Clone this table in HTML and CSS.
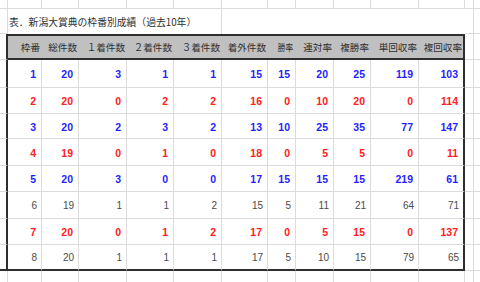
FILE: index.html
```html
<!DOCTYPE html>
<html lang="ja">
<head>
<meta charset="utf-8">
<title>新潟大賞典の枠番別成績</title>
<link rel="stylesheet" href="styles.css">
</head>
<body>
<div class="sheet">
  <div class="row r-top">
    <div class="c"></div><div class="c"></div><div class="c"></div><div class="c"></div><div class="c"></div><div class="c"></div><div class="c"></div><div class="c"></div><div class="c"></div><div class="c"></div><div class="c"></div><div class="c"></div><div class="c"></div><div class="c n"></div>
  </div>
  <div class="row r-title">
    <div class="c"></div>
    <div class="c title nb">表．新潟大賞典の枠番別成績（過去10年）</div>
    <div class="c nb"></div><div class="c nb"></div><div class="c nb"></div><div class="c nb"></div><div class="c nb"></div><div class="c nb"></div>
    <div class="c"></div><div class="c n"></div>
  </div>
  <div class="row r-head">
    <div class="c edge"></div>
    <div class="c h">枠番</div>
    <div class="c h">総件数</div>
    <div class="c h">１着件数</div>
    <div class="c h">２着件数</div>
    <div class="c h">３着件数</div>
    <div class="c h">着外件数</div>
    <div class="c h narrow"><span class="squeeze">勝率</span></div>
    <div class="c h">連対率</div>
    <div class="c h">複勝率</div>
    <div class="c h">単回収率</div>
    <div class="c h last">複回収率</div>
    <div class="c"></div><div class="c n"></div>
  </div>
  <div class="row r-data h28 blue">
    <div class="c edge"></div>
    <div class="c v">1</div><div class="c v">20</div><div class="c v">3</div><div class="c v">1</div><div class="c v">1</div><div class="c v">15</div><div class="c v">15</div><div class="c v">20</div><div class="c v">25</div><div class="c v">119</div><div class="c v last">103</div>
    <div class="c"></div><div class="c n"></div>
  </div>
  <div class="row r-data h26 red">
    <div class="c edge"></div>
    <div class="c v">2</div><div class="c v">20</div><div class="c v">0</div><div class="c v">2</div><div class="c v">2</div><div class="c v">16</div><div class="c v">0</div><div class="c v">10</div><div class="c v">20</div><div class="c v">0</div><div class="c v last">114</div>
    <div class="c"></div><div class="c n"></div>
  </div>
  <div class="row r-data h25 blue">
    <div class="c edge"></div>
    <div class="c v">3</div><div class="c v">20</div><div class="c v">2</div><div class="c v">3</div><div class="c v">2</div><div class="c v">13</div><div class="c v">10</div><div class="c v">25</div><div class="c v">35</div><div class="c v">77</div><div class="c v last">147</div>
    <div class="c"></div><div class="c n"></div>
  </div>
  <div class="row r-data h27 red">
    <div class="c edge"></div>
    <div class="c v">4</div><div class="c v">19</div><div class="c v">0</div><div class="c v">1</div><div class="c v">0</div><div class="c v">18</div><div class="c v">0</div><div class="c v">5</div><div class="c v">5</div><div class="c v">0</div><div class="c v last">11</div>
    <div class="c"></div><div class="c n"></div>
  </div>
  <div class="row r-data h26 blue">
    <div class="c edge"></div>
    <div class="c v">5</div><div class="c v">20</div><div class="c v">3</div><div class="c v">0</div><div class="c v">0</div><div class="c v">17</div><div class="c v">15</div><div class="c v">15</div><div class="c v">15</div><div class="c v">219</div><div class="c v last">61</div>
    <div class="c"></div><div class="c n"></div>
  </div>
  <div class="row r-data h27 plain">
    <div class="c edge"></div>
    <div class="c v">6</div><div class="c v">19</div><div class="c v">1</div><div class="c v">1</div><div class="c v">2</div><div class="c v">15</div><div class="c v">5</div><div class="c v">11</div><div class="c v">21</div><div class="c v">64</div><div class="c v last">71</div>
    <div class="c"></div><div class="c n"></div>
  </div>
  <div class="row r-data h26 red">
    <div class="c edge"></div>
    <div class="c v">7</div><div class="c v">20</div><div class="c v">0</div><div class="c v">1</div><div class="c v">2</div><div class="c v">17</div><div class="c v">0</div><div class="c v">5</div><div class="c v">15</div><div class="c v">0</div><div class="c v last">137</div>
    <div class="c"></div><div class="c n"></div>
  </div>
  <div class="row r-data h26 plain r-end">
    <div class="c edge"></div>
    <div class="c v">8</div><div class="c v">20</div><div class="c v">1</div><div class="c v">1</div><div class="c v">1</div><div class="c v">17</div><div class="c v">5</div><div class="c v">10</div><div class="c v">15</div><div class="c v">79</div><div class="c v last">65</div>
    <div class="c"></div><div class="c n"></div>
  </div>
  <div class="row r-bottom">
    <div class="c"></div><div class="c"></div><div class="c"></div><div class="c"></div><div class="c"></div><div class="c"></div><div class="c"></div><div class="c"></div><div class="c"></div><div class="c"></div><div class="c"></div><div class="c"></div><div class="c"></div><div class="c n"></div>
  </div>
</div>
</body>
</html>
```

FILE: styles.css
```css
html, body {
  margin: 0;
  padding: 0;
  background: #ffffff;
}

.sheet {
  width: 480px;
  height: 282px;
  overflow: hidden;
  display: flex;
  flex-direction: column;
  font-family: "Noto Sans CJK JP", "Noto Sans", sans-serif;
  color: #333333;
}

.row {
  display: grid;
  grid-template-columns: 8px 34px 37px 48px 47px 48px 46px 28px 38px 37px 48px 46px 9px 1fr;
  flex: none;
}

.c {
  box-sizing: border-box;
  border-right: 1px solid #dcdcdc;
  border-bottom: 1px solid #dcdcdc;
  min-width: 0;
  white-space: nowrap;
}

.c.n { border-right: none; }

.r-top { height: 9px; }
.r-title { height: 25px; }
.r-head { height: 26px; }
.h28 { height: 28px; }
.h27 { height: 27px; }
.h26 { height: 26px; }
.h25 { height: 25px; }
.r-bottom { flex: 1; }
.r-bottom .c { border-bottom: none; }

.c.nb { border-right: none; border-bottom: none; }
.r-title .c:nth-child(8) { border-bottom: none; }

.title {
  grid-column: span 5;
  border-right: 1px solid #dcdcdc !important;
  display: flex;
  align-items: center;
  padding-left: 1px;
  padding-top: 1px;
  font-size: 9.8px;
  color: #2f2f2f;
  overflow: visible;
}

.c.edge {
  border-right: 2px solid #2e2e2e;
}

.c.last {
  border-right: 2px solid #2e2e2e;
}

.c.h {
  background: #c0c0c0;
  border-top: 2px solid #2e2e2e;
  border-bottom: 2px solid #2e2e2e;
  border-right: none;
  display: flex;
  align-items: center;
  justify-content: flex-end;
  padding-right: 2px;
  font-size: 9.6px;
  color: #2f2f2f;
}

.c.h.last {
  border-right: 2px solid #2e2e2e;
  padding-right: 1px;
}

.c.h.narrow {
  padding-right: 3px;
}

.squeeze {
  display: inline-block;
  transform: scaleX(0.8);
  transform-origin: right center;
}

.c.v {
  display: flex;
  align-items: center;
  justify-content: flex-end;
  padding-right: 5px;
  padding-top: 1px;
  font-family: "Liberation Sans", Arial, sans-serif;
  font-size: 10.5px;
}

.blue .c.v { color: #1f1fff; font-weight: bold; }
.red .c.v { color: #ff2020; font-weight: bold; }
.plain .c.v { color: #4a4a4a; font-weight: normal; font-size: 10px; padding-right: 4px; }

.r-end .c.v,
.r-end .c.edge {
  border-bottom: 2px solid #2e2e2e;
}
```
